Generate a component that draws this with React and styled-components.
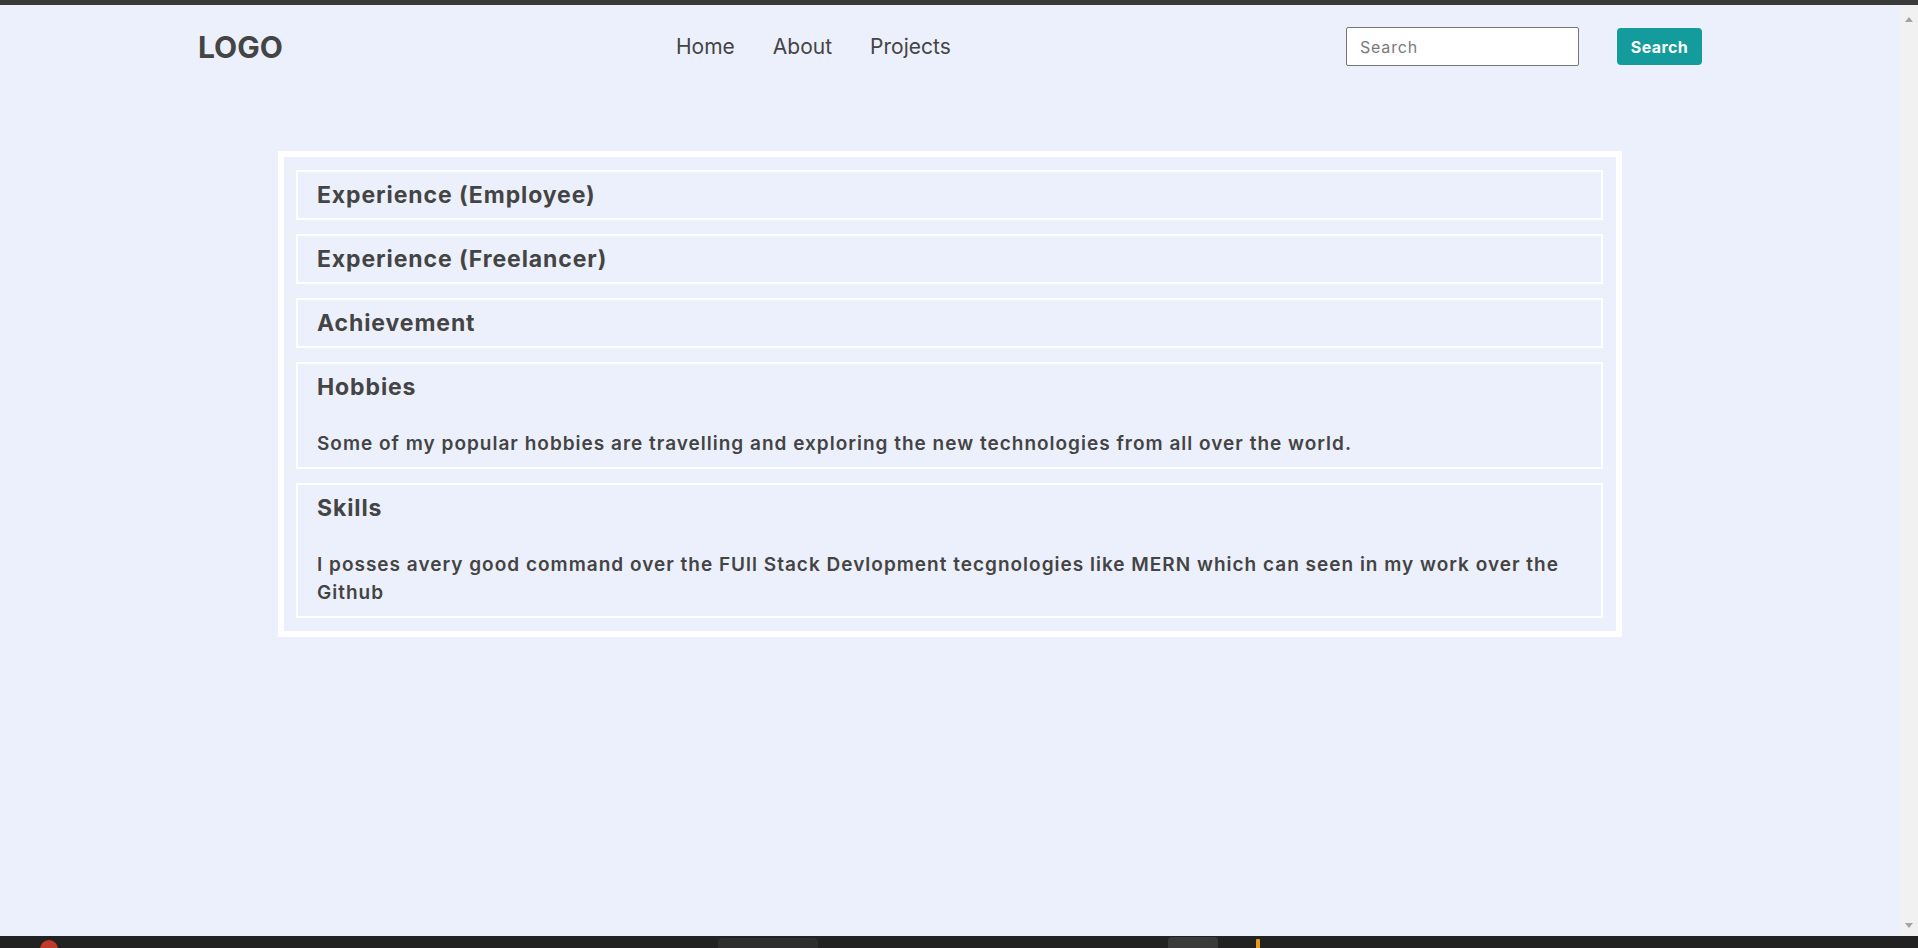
import styled, { createGlobalStyle } from "styled-components";

const GlobalStyle = createGlobalStyle`
  html, body {
    margin: 0;
    padding: 0;
    overflow: hidden;
  }
  * {
    box-sizing: border-box;
  }
`;

const Screen = styled.div`
  width: 1918px;
  height: 948px;
  display: flex;
  flex-direction: column;
  font-family: "Inter", "Open Sans", sans-serif;
  color: #444444;
`;

const TopStrip = styled.div`
  height: 5px;
  background: #3a3a3a;
  flex-shrink: 0;
`;

const Viewport = styled.div`
  flex: 1;
  display: flex;
  min-height: 0;
`;

const Page = styled.div`
  flex: 1;
  background: #ecf0fc;
  overflow: hidden;
`;

const Scrollbar = styled.div`
  width: 18px;
  background: #f1f1f1;
  display: flex;
  flex-direction: column;
  justify-content: space-between;
  align-items: center;
  padding: 12px 0 8px;
`;

const Arrow = styled.div`
  width: 0;
  height: 0;
  border-left: 4px solid transparent;
  border-right: 4px solid transparent;
  ${(p) =>
    p.$down
      ? "border-top: 5px solid #a3a3a3;"
      : "border-bottom: 5px solid #a3a3a3;"}
`;

const Taskbar = styled.div`
  height: 12px;
  background: #222222;
  display: flex;
  align-items: flex-start;
  overflow: hidden;
  flex-shrink: 0;
`;

const TaskIcon = styled.div`
  margin-left: ${(p) => p.$left}px;
  margin-top: ${(p) => p.$top || 0}px;
  width: ${(p) => p.$w}px;
  height: 20px;
  border-radius: ${(p) => p.$radius || 4}px;
  background: ${(p) => p.$bg};
  flex-shrink: 0;
`;

const Header = styled.header`
  width: 1504px;
  margin: 0 auto;
  padding-top: 22px;
  height: 61px;
  display: grid;
  grid-template-columns: 478px 1fr auto;
  align-items: center;
`;

const Logo = styled.div`
  font-size: 30px;
  font-weight: 700;
  color: #444444;
`;

const Nav = styled.nav`
  display: flex;
  gap: 38px;
`;

const NavLink = styled.a`
  font-size: 21px;
  font-weight: 400;
  color: #444444;
  text-decoration: none;
`;

const SearchGroup = styled.div`
  display: flex;
  align-items: center;
  gap: 38px;
`;

const SearchInput = styled.input`
  width: 233px;
  height: 39px;
  border: 1px solid #767676;
  border-radius: 2px;
  background: #ffffff;
  padding: 0 13px;
  font-family: "Inter", sans-serif;
  font-size: 16px;
  letter-spacing: 0.8px;
  color: #444444;
  &::placeholder {
    color: #7a7a7a;
  }
`;

const SearchButton = styled.button`
  width: 85px;
  height: 37px;
  border: none;
  border-radius: 4px;
  background: #139c9b;
  color: #ffffff;
  font-family: "Inter", sans-serif;
  font-size: 16px;
  font-weight: 700;
  letter-spacing: 0.4px;
`;

const Panel = styled.section`
  width: 1344px;
  margin: 85px auto 0;
  border: 6px solid #ffffff;
  padding: 13px 13px 13px 12px;
  display: flex;
  flex-direction: column;
  gap: 14px;
`;

const Item = styled.div`
  border: 2px solid #ffffff;
  padding: 0 19px;
`;

const ItemTitle = styled.h3`
  margin: 0;
  font-size: 23px;
  font-weight: 700;
  letter-spacing: 0.9px;
  line-height: 46px;
  color: #444444;
`;

const ItemText = styled.p`
  margin: 20px 0 9px;
  font-size: 19px;
  font-weight: 600;
  letter-spacing: 1px;
  line-height: 28px;
  color: #444444;
`;

const sections = [
  { title: "Experience (Employee)" },
  { title: "Experience (Freelancer)" },
  { title: "Achievement" },
  {
    title: "Hobbies",
    text: "Some of my popular hobbies are travelling and exploring the new technologies from all over the world.",
  },
  {
    title: "Skills",
    text: "I posses avery good command over the FUll Stack Devlopment tecgnologies like MERN which can seen in my work over the Github",
  },
];

export default function App() {
  return (
    <Screen>
      <GlobalStyle />
      <TopStrip />
      <Viewport>
        <Page>
          <Header>
            <Logo>LOGO</Logo>
            <Nav>
              <NavLink href="#">Home</NavLink>
              <NavLink href="#">About</NavLink>
              <NavLink href="#">Projects</NavLink>
            </Nav>
            <SearchGroup>
              <SearchInput placeholder="Search" />
              <SearchButton>Search</SearchButton>
            </SearchGroup>
          </Header>
          <Panel>
            {sections.map((s) => (
              <Item key={s.title}>
                <ItemTitle>{s.title}</ItemTitle>
                {s.text && <ItemText>{s.text}</ItemText>}
              </Item>
            ))}
          </Panel>
        </Page>
        <Scrollbar>
          <Arrow />
          <Arrow $down />
        </Scrollbar>
      </Viewport>
      <Taskbar>
        <TaskIcon $left={40} $top={4} $w={18} $radius={9} $bg="#c0392b" />
        <TaskIcon $left={660} $top={2} $w={100} $bg="#2e2e2e" />
        <TaskIcon $left={350} $top={1} $w={50} $bg="#3a3a3a" />
        <TaskIcon $left={38} $top={3} $w={4} $radius={1} $bg="#e59a1b" />
      </Taskbar>
    </Screen>
  );
}
